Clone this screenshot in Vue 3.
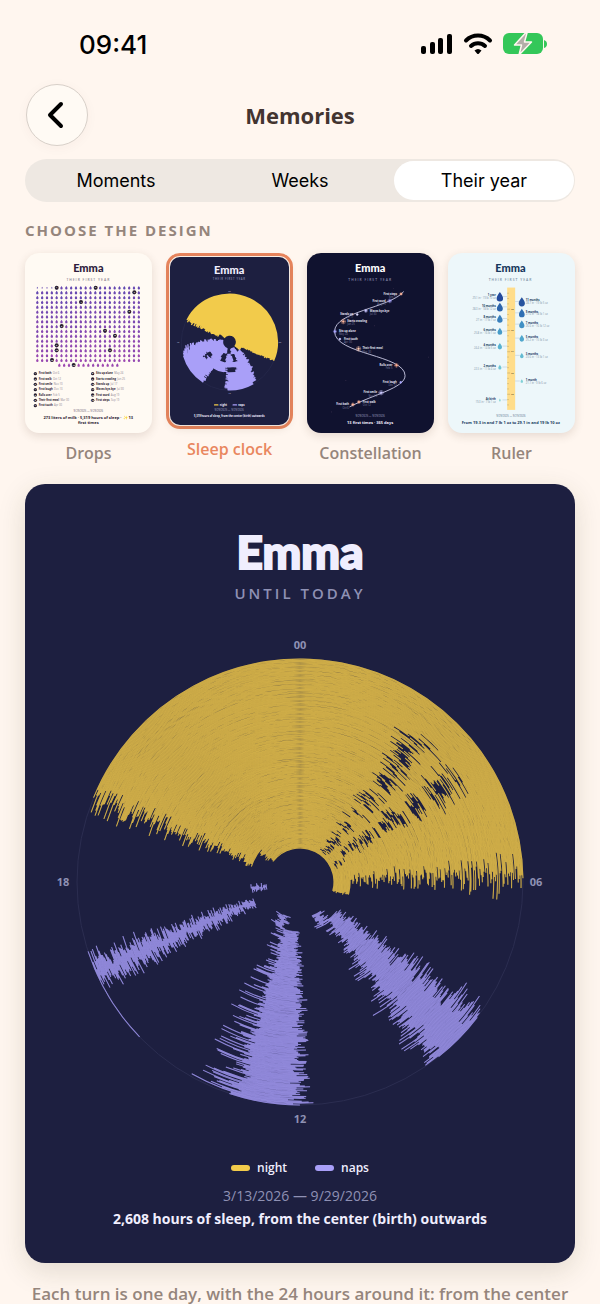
<script setup>
import { ref } from 'vue';

const tabs = ['Moments', 'Weeks', 'Their year'];
const activeTab = ref('Their year');

const designs = ['Drops', 'Sleep clock', 'Constellation', 'Ruler'];
const activeDesign = ref('Sleep clock');

// small seeded random, so the clock looks the same on every visit
const makeRandom = (seed) => () => {
  seed = (seed * 1664525 + 1013904223) % 4294967296;
  return seed / 4294967296;
};

// arc from one angle to another, clockwise, 0 is midnight
const arc = (cx, cy, r, from, to) => {
  const point = (deg) => {
    const a = (deg * Math.PI) / 180;
    return (cx + r * Math.sin(a)).toFixed(2) + ' ' + (cy - r * Math.cos(a)).toFixed(2);
  };
  return `M${point(from)}A${r.toFixed(2)} ${r.toFixed(2)} 0 ${to - from > 180 ? 1 : 0} 1 ${point(to)}`;
};

const buildClock = () => {
  const rand = makeRandom(41);
  const around = (mid, spread) => mid + (rand() + rand() - 1) * spread;
  const days = 200;
  let night = '';
  let naps = '';
  let gapA = false;
  let gapB = false;

  for (let i = 0; i <= days; i++) {
    const r = 34 + (i * 189) / days;
    const add = (from, to) => {
      naps += arc(275, 250, r, from, to);
    };
    const newborn = r < 51;
    const start = newborn ? around(-54, 5) : around(r < 60 ? -71 : -68, r < 60 ? 3 : 6);
    const end = newborn ? around(105, 4) : around(88, 8);

    // awakenings come in runs of a few days
    if (rand() < 0.6) gapA = rand() < 0.65;
    if (rand() < 0.6) gapB = rand() < 0.6;
    let from = start;
    if (gapA && r > 37 && r < 193) {
      const a = around(37, 7);
      night += arc(275, 250, r, from, a);
      from = a + 4 + rand() * 4;
    }
    if (gapB && r > 37 && r < 191) {
      const a = around(newborn ? 62 : 53, 5);
      night += arc(275, 250, r, from, a);
      from = a + 4 + rand() * 4;
    }
    night += arc(275, 250, r, from, end);

    if (r < 50) {
      if (r > 35) add(around(145, 8), around(159, 7));
      if (r > 36) add(around(199, 9), around(212, 9));
      add(around(259, 4), around(265, 4));
    }
    if (r >= 47) add(around(127, 6), around(143, 4) + (rand() < 0.35 ? rand() * 7 : 0));
    if (r >= 50) {
      add(around(r < 70 ? 182 : 180, 4), around(197, 3) + (rand() < 0.5 ? rand() * 12 : 0));
      add(i === days ? 226 : around(243, 4), around(250, 4));
    }
  }
  return { night, naps, pitch: 189 / days };
};

const buildSmallClock = () => {
  const rand = makeRandom(7);
  const around = (mid, spread) => mid + (rand() - 0.5) * spread;
  let night = '';
  let naps = '';
  for (let i = 0; i <= 60; i++) {
    const f = i / 60;
    const r = 21 + f * 123;
    const add = (from, to) => {
      naps += arc(209, 293, r, from, to);
    };
    night += arc(209, 293, r, around(f < 0.15 ? -50 : -63, 6), around(f < 0.15 ? 128 : 113, 3));
    const a = around(f < 0.15 ? 142 : 124 + f * 25, 8);
    const c = around(282 - f * 24, 12);
    if (f < 0.12) {
      add(a, around(172, 6));
      add(around(195, 6), c);
    } else if (f < 0.34) {
      add(a, around(157, 6));
      add(around(172, 8), around(190, 8));
      add(around(209, 8), c);
    } else if (f < 0.44) {
      add(a, around(230, 8));
      add(around(246, 8), c);
    } else if (f < 0.58) {
      add(a, around(166, 6));
      add(around(188, 8), around(236, 8));
      add(around(244, 6), c);
    } else {
      add(a, around(184, 6));
      add(around(214, 7), c);
    }
  }
  return { night, naps };
};

const clock = buildClock();
const smallClock = buildSmallClock();

const drops = [];
for (let i = 0; i < 365; i++) {
  const row = Math.floor(i / 22);
  const col = i % 22;
  drops.push({
    x: (row === 16 ? 118 : 52) + col * 14.5,
    y: 128 + row * 14.5,
    size: i < 4 ? 0.5 : 1,
    color: `hsl(${252 + row * 2 + ((i * 7) % 9)}, 42%, 49%)`
  });
}

const firsts = [
  { x: 110, y: 128, name: 'First bath', date: 'Oct 6' },
  { x: 227, y: 128, name: 'First walk', date: 'Oct 12' },
  { x: 343, y: 142, name: 'First smile', date: 'Nov 10' },
  { x: 183, y: 171, name: 'First laugh', date: 'Dec 13' },
  { x: 328, y: 200, name: 'Rolls over', date: 'Feb 5' },
  { x: 125, y: 243, name: 'Their first meal', date: 'Mar 30' },
  { x: 255, y: 257, name: 'First tooth', date: 'Apr 30' },
  { x: 285, y: 272, name: 'Sits up alone', date: 'May 24' },
  { x: 110, y: 301, name: 'Starts crawling', date: 'Jun 25' },
  { x: 110, y: 316, name: 'Stands up', date: 'Jul 17' },
  { x: 270, y: 316, name: 'Waves bye-bye', date: 'Jul 30' },
  { x: 96, y: 345, name: 'First word', date: 'Aug 19' },
  { x: 161, y: 360, name: 'First steps', date: 'Sep 19' }
];

const stars = [
  { x: 305, y: 147, name: 'First steps', date: 'Sep 19', left: true, size: 5, color: '#ffb59a' },
  { x: 271, y: 168, name: 'First word', date: 'Aug 19', left: true, size: 7, color: '#a9a4ff' },
  { x: 199, y: 198, name: 'Waves bye-bye', date: 'Jul 30', size: 6, color: '#c9c5ff' },
  { x: 173, y: 209, name: 'Stands up', date: 'Jul 17', left: true, size: 4, color: '#dddaff' },
  { x: 131, y: 230, name: 'Starts crawling', date: 'Jun 25', size: 8, color: '#ffb59a' },
  { x: 106, y: 260, name: 'Sits up alone', date: 'May 24', size: 6, color: '#a9a4ff' },
  { x: 121, y: 283, name: 'First tooth', date: 'Apr 30', size: 4, color: '#c9c5ff' },
  { x: 177, y: 312, name: 'Their first meal', date: 'Mar 30', size: 8, color: '#ffc7b0' },
  { x: 291, y: 362, name: 'Rolls over', date: 'Feb 5', left: true, size: 7, color: '#ffa888' },
  { x: 304, y: 413, name: 'First laugh', date: 'Dec 13', left: true, size: 4, color: '#a9a4ff' },
  { x: 245, y: 444, name: 'First smile', date: 'Nov 10', left: true, size: 8, color: '#c9c5ff' },
  { x: 178, y: 472, name: 'First walk', date: 'Oct 12', size: 6, color: '#ffb59a' },
  { x: 160, y: 480, name: 'First bath', date: 'Oct 6', left: true, size: 6, color: '#ffb59a' }
];

const heights = [
  { y: 155, name: '1 year', value: '29.1 in · 19 lb 10 oz', size: 2.7, color: '#234a9c', left: true },
  { y: 170, name: '11 months', value: '28.7 in · 19 lb 5 oz', size: 2.6, color: '#27549f' },
  { y: 186, name: '10 months', value: '28.3 in · 18 lb 12 oz', size: 2.5, color: '#2c64ab', left: true },
  { y: 204, name: '9 months', value: '27.6 in · 18 lb 1 oz', size: 2.4, color: '#2f6fb3' },
  { y: 221, name: '8 months', value: '27 in · 17 lb 7 oz', size: 2.3, color: '#387fbc', left: true },
  { y: 238, name: '7 months', value: '26.6 in · 16 lb 12 oz', size: 2.2, color: '#4190c4' },
  { y: 259, name: '6 months', value: '25.8 in · 16 lb 1 oz', size: 2, color: '#479bc8', left: true },
  { y: 280, name: '5 months', value: '25.2 in · 15 lb 3 oz', size: 1.9, color: '#50a7cd' },
  { y: 304, name: '4 months', value: '24.4 in · 14 lb 5 oz', size: 1.8, color: '#59b2d0', left: true },
  { y: 332, name: '3 months', value: '23.6 in · 13 lb 1 oz', size: 1.5, color: '#64bbd2' },
  { y: 367, name: '2 months', value: '22.5 in · 11 lb 4 oz', size: 1.3, color: '#70c6d4', left: true },
  { y: 409, name: '1 month', value: '21.1 in · 9 lb 6 oz', size: 1, color: '#80d0d6' },
  { y: 466, name: 'At birth', value: '19.3 in · 7 lb 1 oz', size: 0.8, color: '#96dbd8', left: true }
];

const dropPath = 'M0 -5C2 -2 3.6 0 3.6 2A3.6 3.6 0 0 1 -3.6 2C-3.6 0 -2 -2 0 -5Z';
</script>

<template>
  <div class="screen">
    <div class="status">
      <span class="time">09:41</span>
      <div class="status-icons">
        <svg width="32" height="22" viewBox="0 0 32 22">
          <rect x="0" y="13" width="5" height="8" rx="2" />
          <rect x="9" y="9" width="5" height="12" rx="2" />
          <rect x="17" y="5" width="5" height="16" rx="2" />
          <rect x="26" y="1" width="5" height="20" rx="2" />
        </svg>
        <svg width="30" height="22" viewBox="0 0 30 22" fill="none" stroke="#000" stroke-width="4">
          <path d="M3 7.500A17 17 0 0 1 27 7.500" stroke-linecap="round" />
          <path d="M8 13A10.500 10.500 0 0 1 22 13" stroke-linecap="round" />
          <path d="M11.500 17.500Q15 14.500 18.500 17.500L15.800 20.700Q15 21.400 14.200 20.700Z" fill="#000" stroke="none" />
        </svg>
        <svg width="45" height="24" viewBox="0 0 45 24">
          <rect x="0" y="1" width="40" height="21" rx="6" fill="#34c759" />
          <path d="M41 8Q44 9 44 12T41 16Z" fill="#34c759" />
          <path
            d="M22.500 1L11.500 13H18.500L16 23L28.500 10H21.500L24 1Z"
            fill="#b3aea8"
            stroke="#fff7f0"
            stroke-width="1.500"
            stroke-linejoin="round"
          />
        </svg>
      </div>
    </div>

    <header class="top">
      <button class="back" type="button" aria-label="Back">
        <svg width="20" height="30" viewBox="0 0 20 30" fill="none" stroke="#000" stroke-width="4">
          <path d="M16 4L5 15L16 26" stroke-linecap="round" stroke-linejoin="round" />
        </svg>
      </button>
      <h1>Memories</h1>
    </header>

    <nav class="tabs">
      <button
        v-for="tab in tabs"
        :key="tab"
        type="button"
        :class="{ active: tab === activeTab }"
        @click="activeTab = tab"
      >
        {{ tab }}
      </button>
    </nav>

    <h2 class="section-title">CHOOSE THE DESIGN</h2>

    <div class="designs">
      <button
        v-for="design in designs"
        :key="design"
        type="button"
        class="design"
        :class="{ selected: design === activeDesign }"
        @click="activeDesign = design"
      >
        <span class="frame">
          <svg v-if="design === 'Drops'" class="thumb cream" viewBox="15 24 381 540">
            <text x="205" y="82" class="name" fill="#2e1c3c">Emma</text>
            <text x="205" y="107" class="sub" fill="#8d8391">THEIR FIRST YEAR</text>
            <path
              v-for="(drop, i) in drops"
              :key="i"
              :d="dropPath"
              :fill="drop.color"
              :transform="`translate(${drop.x} ${drop.y}) scale(${drop.size})`"
            />
            <g v-for="(first, i) in firsts" :key="first.name">
              <circle :cx="first.x" :cy="first.y" r="6" fill="#2b2030" />
              <text :x="first.x" :y="first.y + 2" class="number">{{ i + 1 }}</text>
              <circle :cx="i < 7 ? 46 : 218" :cy="386 + (i % 7) * 16" r="5" fill="#2b2030" />
              <text :x="i < 7 ? 46 : 218" :y="388 + (i % 7) * 16" class="number">{{ i + 1 }}</text>
              <text :x="i < 7 ? 56 : 228" :y="388 + (i % 7) * 16" class="item" fill="#2b2030">
                {{ first.name }} <tspan class="light" fill="#8d8391">&nbsp;{{ first.date }}</tspan>
              </text>
            </g>
            <text x="205" y="501" class="dates" fill="#8d8391">9/29/2025 — 9/29/2026</text>
            <text x="205" y="521" class="total" fill="#2b2030">
              273 liters of milk · 5,319 hours of sleep · <tspan fill="#f2cf4e">✨</tspan> 13
            </text>
            <text x="205" y="538" class="total" fill="#2b2030">first times</text>
          </svg>

          <svg v-else-if="design === 'Sleep clock'" class="thumb night" viewBox="30 37 358 506">
            <text x="208" y="89" class="name" fill="#f0eefe">Emma</text>
            <text x="208" y="107" class="sub small" fill="#8688ab">THEIR FIRST YEAR</text>
            <circle cx="209" cy="293" r="145" fill="none" stroke="#34365c" />
            <path :d="smallClock.night" class="ring night-ring" />
            <path :d="smallClock.naps" class="ring nap-ring" />
            <g class="hours tiny">
              <text x="209" y="141">00</text>
              <text x="361" y="295">06</text>
              <text x="209" y="449">12</text>
              <text x="54" y="295">18</text>
            </g>
            <rect x="162" y="480" width="14" height="4" rx="2" fill="#f2cb4b" />
            <text x="180" y="484" class="item" fill="#f0eefe">night</text>
            <rect x="218" y="480" width="14" height="4" rx="2" fill="#a99ff8" />
            <text x="235" y="484" class="item" fill="#f0eefe">naps</text>
            <text x="208" y="501" class="dates" fill="#8688ab">9/29/2025 — 9/29/2026</text>
            <text x="208" y="519" class="total small" fill="#f0eefe">
              5,319 hours of sleep, from the center (birth) outwards
            </text>
          </svg>

          <svg v-else-if="design === 'Constellation'" class="thumb sky" viewBox="22 24 382 540">
            <text x="212" y="82" class="name" fill="#fff">Emma</text>
            <text x="212" y="107" class="sub" fill="#8688ab">THEIR FIRST YEAR</text>
            <path
              d="M313 140C270 190 105 200 105 260C105 330 317 330 317 393C317 430 220 450 150 487"
              fill="none"
              stroke="#b9b9d4"
              stroke-width="3"
            />
            <g v-for="star in stars" :key="star.name">
              <circle :cx="star.x" :cy="star.y" :r="star.size" :fill="star.color" opacity="0.3" />
              <path
                :d="`M${star.x - star.size} ${star.y}h${star.size * 2}M${star.x} ${star.y - star.size}v${star.size * 2}`"
                :stroke="star.color"
                stroke-width="1"
              />
              <circle :cx="star.x" :cy="star.y" r="3" :fill="star.color" />
              <g :class="star.left ? 'to-left' : ''">
                <text :x="star.x + (star.left ? -12 : 12)" :y="star.y + 2" class="item" fill="#e8e6f6">
                  {{ star.name }}
                </text>
                <text :x="star.x + (star.left ? -12 : 12)" :y="star.y + 12" class="item light" fill="#7c7d9f">
                  {{ star.date }}
                </text>
              </g>
            </g>
            <g fill="#6d5470">
              <circle cx="225" cy="243" r="1" />
              <circle cx="388" cy="337" r="1" />
              <circle cx="139" cy="408" r="1" />
              <circle cx="283" cy="130" r="1" />
              <circle cx="95" cy="502" r="1" />
            </g>
            <text x="212" y="518" class="dates" fill="#8688ab">9/29/2025 — 9/29/2026</text>
            <text x="212" y="537" class="total" fill="#f0eefe">13 first times · 365 days</text>
          </svg>

          <svg v-else class="thumb ice" viewBox="26 24 382 540">
            <text x="214" y="82" class="name" fill="#17375c">Emma</text>
            <text x="214" y="107" class="sub" fill="#7d93a8">THEIR FIRST YEAR</text>
            <rect x="204" y="128" width="24" height="368" fill="#ffdd8a" />
            <path
              v-for="n in 22"
              :key="n"
              :d="`M204 ${129 + n * 16}h${n % 4 === 0 ? 9 : 5}`"
              stroke="#8a7a52"
            />
            <text v-for="n in 5" :key="'t' + n" x="220" :y="131 + n * 64" class="number dark">
              {{ 30 - n * 2 }}
            </text>
            <g v-for="h in heights" :key="h.name" :class="h.left ? 'to-left' : ''">
              <path :d="h.left ? `M190 ${h.y}H204` : `M228 ${h.y}H242`" stroke="#8fa7bb" />
              <path
                :d="dropPath"
                :fill="h.color"
                :transform="`translate(${h.left ? 182 : 248} ${h.y}) scale(${h.size})`"
              />
              <text :x="h.left ? 170 : 260" :y="h.y - 1" class="item" fill="#17375c">{{ h.name }}</text>
              <text :x="h.left ? 170 : 260" :y="h.y + 8" class="item light" fill="#7d93a8">{{ h.value }}</text>
            </g>
            <text x="215" y="518" class="dates" fill="#7d93a8">9/29/2025 — 9/29/2026</text>
            <text x="215" y="537" class="total" fill="#17375c">
              From 19.3 in and 7 lb 1 oz to 29.1 in and 19 lb 10 oz
            </text>
          </svg>
        </span>
        <span class="label">{{ design }}</span>
      </button>
    </div>

    <article class="poster">
      <h2>Emma</h2>
      <p class="until">UNTIL TODAY</p>
      <svg class="clock" viewBox="0 0 550 500">
        <circle cx="275" cy="250" r="223" fill="none" stroke="#2b2d50" />
        <g fill="none">
          <path :d="clock.night" stroke="#b89942" :stroke-width="clock.pitch * 1.1" />
          <path :d="clock.night" stroke="#f6d052" :stroke-width="clock.pitch * 0.6" opacity="0.6" />
          <path :d="clock.naps" stroke="#7f79c6" :stroke-width="clock.pitch * 1.1" />
          <path :d="clock.naps" stroke="#aea4fc" :stroke-width="clock.pitch * 0.6" opacity="0.6" />
        </g>
        <g class="hours">
          <text x="275" y="17">00</text>
          <text x="511" y="254">06</text>
          <text x="275" y="491">12</text>
          <text x="38" y="254">18</text>
        </g>
      </svg>
      <div class="legend">
        <span><i class="swatch night-swatch"></i>night</span>
        <span><i class="swatch nap-swatch"></i>naps</span>
      </div>
      <p class="period">3/13/2026 — 9/29/2026</p>
      <p class="summary">2,608 hours of sleep, from the center (birth) outwards</p>
    </article>

    <p class="caption">Each turn is one day, with the 24 hours around it: from the center</p>
  </div>
</template>

<style>
body {
  margin: 0;
  background: #fff6ef;
}
</style>

<style scoped>
.screen {
  box-sizing: border-box;
  padding: 4px 25px 0;
  background: #fff6ef;
  color: #433430;
  font-family: 'Open Sans', 'Noto Sans', sans-serif;
}

h1,
h2,
p {
  margin: 0;
}

button {
  padding: 0;
  border: 0;
  background: none;
  font: inherit;
  cursor: pointer;
}

.status {
  display: flex;
  align-items: center;
  justify-content: space-between;
  height: 80px;
  padding: 0 27px 0 54px;
}

.time {
  color: #000;
  font: 500 26px Inter, sans-serif;
}

.status-icons {
  display: flex;
  align-items: center;
  gap: 10px;
}

.top {
  display: grid;
  grid-template-columns: 64px 1fr 64px;
  align-items: center;
  height: 60px;
}

.top h1 {
  text-align: center;
  font-size: 22px;
  font-weight: 700;
}

.back {
  display: flex;
  align-items: center;
  justify-content: center;
  box-sizing: border-box;
  width: 62px;
  height: 62px;
  margin-left: 1px;
  padding-right: 4px;
  border: 1px solid #d8d0c9;
  border-radius: 50%;
  background: #fffaf4;
  box-shadow: 0 2px 12px rgba(90, 60, 40, 0.04);
}

.tabs {
  display: grid;
  grid-template-columns: repeat(3, 1fr);
  gap: 4px;
  margin-top: 15px;
  padding: 2px 1px;
  border-radius: 22px;
  background: #eee8e2;
}

.tabs button {
  height: 39px;
  border-radius: 20px;
  color: #000;
  font: 400 18px Inter, sans-serif;
}

.tabs .active {
  background: #fff;
}

.section-title {
  margin-top: 18px;
  color: #95857c;
  font-size: 15px;
  font-weight: 700;
  line-height: 20px;
  letter-spacing: 2px;
}

.designs {
  display: grid;
  grid-template-columns: repeat(4, 1fr);
  align-items: start;
  gap: 14px;
  margin-top: 13px;
}

.design {
  display: flex;
  flex-direction: column;
  gap: 8px;
  color: #95857c;
  font-size: 16px;
  font-weight: 600;
  line-height: 24px;
  text-align: center;
}

.frame {
  display: block;
  border-radius: 14px;
}

.thumb {
  display: block;
  width: 100%;
  border-radius: 14px;
  box-shadow: 0 3px 10px rgba(80, 50, 30, 0.14);
}

.selected {
  color: #e9865e;
}

.selected .frame {
  padding: 1px;
  border: 3px solid #e9865e;
}

.selected .thumb {
  border-radius: 10px;
}

.cream {
  background: #fffaf3;
}

.night {
  background: #1d1f40;
}

.sky {
  background: #10122f;
}

.ice {
  background: #edf7fa;
}

.thumb .name,
.thumb .sub,
.thumb .dates,
.thumb .total,
.thumb .number,
.hours text {
  text-anchor: middle;
}

.thumb .name {
  font-family: Lato, sans-serif;
  font-size: 33px;
  font-weight: 900;
}

.thumb .sub {
  font-size: 10px;
  font-weight: 600;
  letter-spacing: 3px;
}

.thumb .sub.small {
  font-size: 8px;
  letter-spacing: 2px;
}

.thumb .dates {
  font-size: 8px;
}

.thumb .total {
  font-size: 12px;
  font-weight: 700;
}

.thumb .total.small {
  font-size: 8px;
}

.thumb .item {
  font-size: 8px;
  font-weight: 700;
}

.thumb .light {
  font-weight: 400;
}

.thumb .number {
  fill: #fff;
  font-size: 6px;
  font-weight: 700;
}

.thumb .number.dark {
  fill: #5e5334;
}

.to-left text {
  text-anchor: end;
}

.ring {
  fill: none;
  stroke-width: 4;
}

.night-ring {
  stroke: #f2cb4b;
}

.nap-ring {
  stroke: #a99ff8;
}

.hours text {
  fill: #8f91b4;
  font-size: 11px;
  font-weight: 700;
}

.hours.tiny text {
  font-size: 7px;
}

.poster {
  display: flex;
  flex-direction: column;
  align-items: center;
  margin-top: 19px;
  padding: 40px 0 34px;
  border-radius: 20px;
  background: #1d1f40;
  box-shadow: 0 8px 28px rgba(60, 60, 30, 0.15);
  color: #f0eefe;
}

.poster h2 {
  font-family: Lato, sans-serif;
  font-size: 46px;
  font-weight: 900;
  line-height: 56px;
  -webkit-text-stroke: 2px #f0eefe;
}

.until {
  margin-top: 3px;
  color: #8f91b4;
  font-size: 15px;
  font-weight: 600;
  line-height: 20px;
  letter-spacing: 3px;
}

.clock {
  display: block;
  width: 100%;
  margin-top: 29px;
}

.legend {
  display: flex;
  gap: 28px;
  margin-top: 27px;
  font-size: 12px;
  font-weight: 600;
  line-height: 18px;
}

.legend span {
  display: flex;
  align-items: center;
  gap: 7px;
}

.swatch {
  width: 19px;
  height: 6px;
  border-radius: 3px;
}

.night-swatch {
  background: #f2cb4b;
}

.nap-swatch {
  background: #a99ff8;
}

.period {
  margin-top: 9px;
  color: #8f91b4;
  font-size: 14px;
  line-height: 20px;
}

.summary {
  margin-top: 3px;
  font-size: 14px;
  font-weight: 700;
  line-height: 20px;
}

.caption {
  margin: 19px -8px 0;
  color: #95857c;
  font-size: 17px;
  font-weight: 600;
  line-height: 24px;
  text-align: center;
}
</style>
